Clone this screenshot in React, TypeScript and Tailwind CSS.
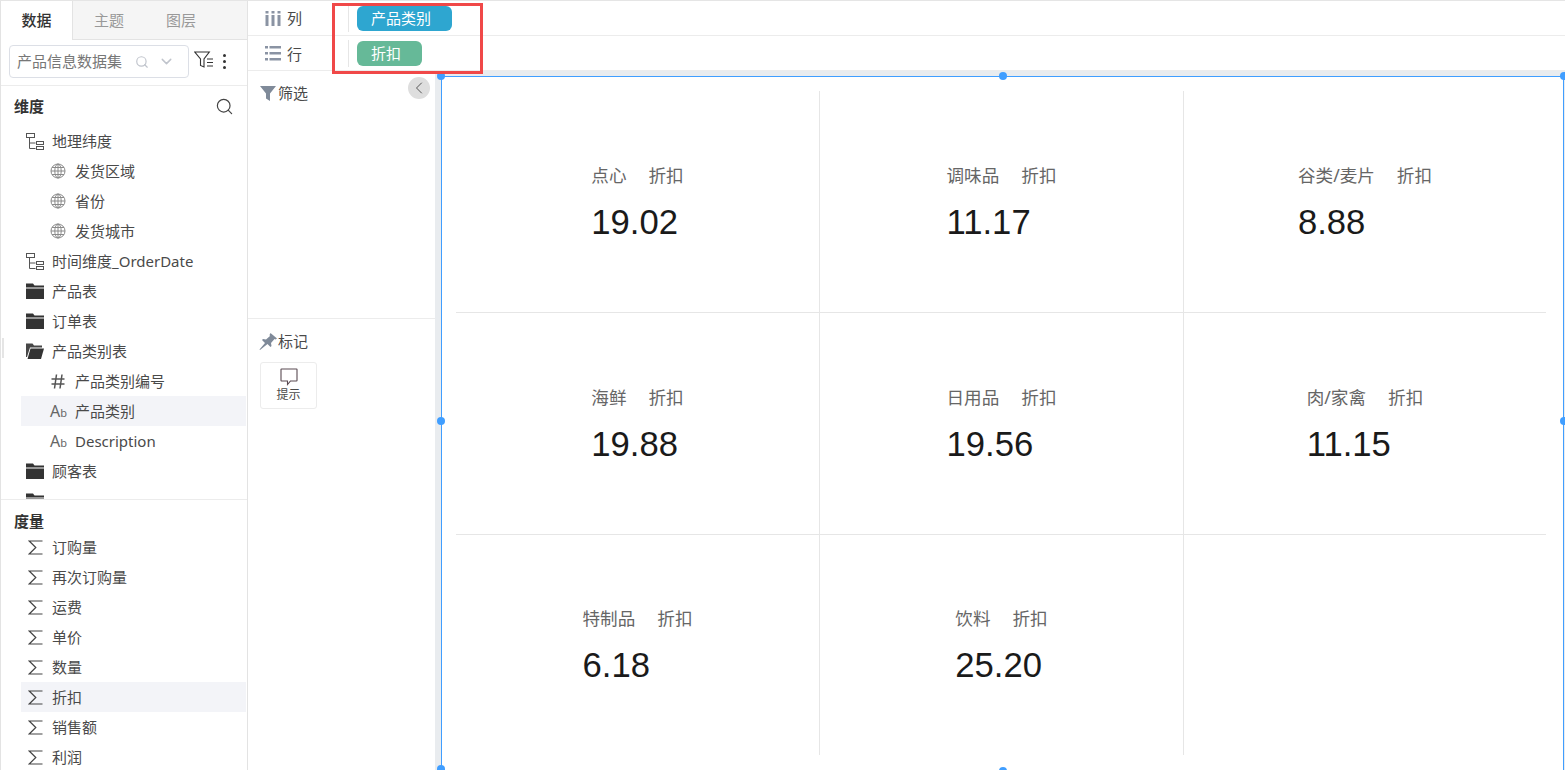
import { ChevronDown, ChevronLeft, Search } from "lucide-react";
import type { ReactNode } from "react";

const TreeIcon = () => (
  <svg width="18" height="17" viewBox="0 0 18 17" fill="none" stroke="#555" strokeWidth="1">
    <rect x="0.5" y="0.5" width="8" height="4" />
    <path d="M3.5 5v10.5h6M3.5 10h6" />
    <rect x="10.5" y="8.5" width="7" height="3" />
    <rect x="10.5" y="13.5" width="7" height="3" />
  </svg>
);

const GlobeIcon = () => (
  <svg width="16" height="16" viewBox="0 0 16 16" fill="none" stroke="#8a8a8a" strokeWidth="1">
    <circle cx="8" cy="8" r="7" />
    <ellipse cx="8" cy="8" rx="3.2" ry="7" />
    <path d="M8 1v14M1 8h14M2 4.5h12M2 11.5h12" />
  </svg>
);

const FolderIcon = () => (
  <svg width="18" height="16" viewBox="0 0 18 16" fill="#333">
    <path d="M0 0.5h7l1.5 2H18v2H0z" />
    <path d="M0 5.5h18V16H0z" />
  </svg>
);

const FolderOpenIcon = () => (
  <svg width="18" height="16" viewBox="0 0 18 16" fill="#333">
    <path d="M0 0.5h6.5l1.5 2h8v2H4L1 14H0z" opacity="0.9" />
    <path d="M4.5 5.5H18L15 16H1.5z" />
  </svg>
);

const SigmaIcon = () => (
  <svg width="15" height="15" viewBox="0 0 15 15" fill="none" stroke="#444" strokeWidth="1.2">
    <path d="M14.5 1H1.2L7.8 7.5 1.2 14h13.3" />
  </svg>
);

const HashIcon = () => (
  <svg width="14" height="15" viewBox="0 0 14 15" fill="none" stroke="#555" strokeWidth="1.5">
    <path d="M5.5 0.500L3.500 14.500M11 0.500L9 14.500M0.500 5h13M0.500 10h13" />
  </svg>
);

const AbIcon = () => (
  <span className="w-[16px] text-[16px] leading-none text-[#666]">
    A<span className="text-[11px]">b</span>
  </span>
);

const FilterListIcon = () => (
  <svg width="20" height="18" viewBox="0 0 20 18" fill="none" stroke="#333" strokeWidth="1.1">
    <path d="M0.8 1h14.5L10 8v8l-3.5-1.500V8z" />
    <path d="M13 8h6M13 11.500h6M13 15h6" />
  </svg>
);

const ColumnsIcon = () => (
  <svg width="16" height="15" viewBox="0 0 16 15" fill="#8a93a3">
    <rect x="0.500" y="0" width="3" height="2.500" />
    <rect x="0.500" y="4" width="3" height="11" />
    <rect x="6.500" y="0" width="3" height="2.500" />
    <rect x="6.500" y="4" width="3" height="11" />
    <rect x="12.500" y="0" width="3" height="2.500" />
    <rect x="12.500" y="4" width="3" height="11" />
  </svg>
);

const RowsIcon = () => (
  <svg width="16" height="15" viewBox="0 0 16 15" fill="#8a93a3">
    <rect x="0" y="0" width="3" height="2.500" />
    <rect x="4.500" y="0" width="11.500" height="2.500" />
    <rect x="0" y="6" width="3" height="2.500" />
    <rect x="4.500" y="6" width="11.500" height="2.500" />
    <rect x="0" y="12" width="3" height="2.500" />
    <rect x="4.500" y="12" width="11.500" height="2.500" />
  </svg>
);

const FunnelIcon = () => (
  <svg width="16" height="16" viewBox="0 0 16 16" fill="#7f8a99">
    <path d="M0 1h16L10 8.500V16l-4-2.500v-5z" />
  </svg>
);

const PinIcon = () => (
  <svg width="18" height="17" viewBox="0 0 18 17" fill="#7f8a99">
    <path d="M11.500 0L18 5.500l-1.500 1-1-.5-3.500 4 .5 3-1 1-3-3L1 17l-.5-.5L6 10 3 7l1-1 3 .5 4-3.500-.5-1z" />
  </svg>
);

const BubbleIcon = () => (
  <svg width="18" height="18" viewBox="0 0 18 18" fill="none" stroke="#5a4a52" strokeWidth="1.100">
    <path d="M1.500 1h15a.500.500 0 0 1 .500.500v11a.500.500 0 0 1-.500.500H10.500L7.500 16.500V13H1.500a.500.500 0 0 1-.500-.500v-11a.500.500 0 0 1 .500-.500z" />
  </svg>
);

type TreeRowProps = {
  icon: ReactNode;
  label: string;
  child?: boolean;
  active?: boolean;
};

const TreeRow = ({ icon, label, child, active }: TreeRowProps) => (
  <div className={`ml-[20px] mr-[1px] flex h-[30px] items-center ${active ? "bg-[#f3f4f8]" : ""}`}>
    <div className={`flex items-center justify-center ${child ? "ml-[29px] w-[16px]" : "ml-[5px] w-[18px]"}`}>
      {icon}
    </div>
    <span className={`whitespace-nowrap text-[15px] text-[#4a4a4a] ${child ? "ml-[9px]" : "ml-[8px]"}`}>{label}</span>
  </div>
);

const dimensions: TreeRowProps[] = [
  { icon: <TreeIcon />, label: "地理纬度" },
  { icon: <GlobeIcon />, label: "发货区域", child: true },
  { icon: <GlobeIcon />, label: "省份", child: true },
  { icon: <GlobeIcon />, label: "发货城市", child: true },
  { icon: <TreeIcon />, label: "时间维度_OrderDate" },
  { icon: <FolderIcon />, label: "产品表" },
  { icon: <FolderIcon />, label: "订单表" },
  { icon: <FolderOpenIcon />, label: "产品类别表" },
  { icon: <HashIcon />, label: "产品类别编号", child: true },
  { icon: <AbIcon />, label: "产品类别", child: true, active: true },
  { icon: <AbIcon />, label: "Description", child: true },
  { icon: <FolderIcon />, label: "顾客表" },
  { icon: <FolderIcon />, label: "" },
];

const measures = ["订购量", "再次订购量", "运费", "单价", "数量", "折扣", "销售额", "利润"];

const cards = [
  { name: "点心", value: "19.02" },
  { name: "调味品", value: "11.17" },
  { name: "谷类/麦片", value: "8.88" },
  { name: "海鲜", value: "19.88" },
  { name: "日用品", value: "19.56" },
  { name: "肉/家禽", value: "11.15" },
  { name: "特制品", value: "6.18" },
  { name: "饮料", value: "25.20" },
  null,
];

const Card = ({ card, index }: { card: (typeof cards)[number]; index: number }) => (
  <div
    className={`flex items-center justify-center border-[#e6e6e6] ${index % 3 !== 2 ? "border-r" : ""} ${
      index < 6 ? "border-b" : ""
    }`}
  >
    {card && (
      <div className="mt-[2px] flex flex-col">
        <div className="-mt-[1px] flex gap-[22px] text-[17.6px] leading-[24px] text-[#666]">
          <span>{card.name}</span>
          <span>折扣</span>
        </div>
        <div className="mt-[15px] font-['Liberation_Sans',sans-serif] text-[34.67px] leading-[40px] text-[#1a1a1a]">
          {card.value}
        </div>
      </div>
    )}
  </div>
);

const Handle = ({ className }: { className: string }) => (
  <div className={`absolute h-[8px] w-[8px] rounded-full bg-[#409eff] ${className}`} />
);

type ShelfRowProps = {
  icon: ReactNode;
  label: string;
  labelClass?: string;
  pill: string;
  pillClass: string;
};

const ShelfRow = ({ icon, label, labelClass, pill, pillClass }: ShelfRowProps) => (
  <div className="flex h-[35px] items-center border-b border-[#ececec]">
    <div className="flex w-[100px] items-center pl-[17px]">
      {icon}
      <span className={`ml-[6px] text-[15px] text-[#4a4a4a] ${labelClass ?? ""}`}>{label}</span>
    </div>
    <div className="h-[27px] w-px bg-[#e6e6e6]" />
    <div className={`ml-[8px] flex h-[25px] items-center rounded-[6px] pl-[14px] text-[15px] text-white ${pillClass}`}>
      {pill}
    </div>
  </div>
);

const App = () => {
  return (
    <div className="relative flex h-[770px] w-[1565px] overflow-hidden border-t border-[#e5e5e5] bg-white font-['Noto_Sans','Noto_Sans_CJK_SC',sans-serif]">
      {/* left data panel */}
      <div className="relative flex w-[248px] shrink-0 flex-col border-x border-[#e3e3e3]">
        <div className="absolute left-[1px] top-[337px] h-[20px] w-[2px] bg-[#e5e5e5]" />

        <div className="flex h-[39px] text-[15px]">
          <div className="flex w-[72px] items-center justify-center border-r border-[#e3e3e3] font-medium text-[#333]">数据</div>
          <div className="flex flex-1 border-b border-[#e3e3e3] bg-[#f5f5f5] text-[#999]">
            <div className="flex w-[72px] items-center justify-center">主题</div>
            <div className="flex w-[72px] items-center justify-center">图层</div>
          </div>
        </div>

        <div className="flex h-[46px] items-start border-b border-[#ececec] pl-[8px] pt-[5px]">
          <div className="flex h-[33px] w-[180px] items-center rounded-[4px] border border-[#dcdfe6] pl-[7px] text-[15px] text-[#777]">
            <span className="whitespace-nowrap">产品信息数据集</span>
            <Search size={14} className="ml-[13px] text-[#c0c4cc]" />
            <ChevronDown size={17} className="ml-[9px] text-[#c0c4cc]" />
          </div>
          <div className="ml-[5px] mt-[6px]">
            <FilterListIcon />
          </div>
          <div className="ml-[9px] mt-[9px] flex flex-col gap-[3px]">
            <div className="h-[3px] w-[3px] rounded-full bg-[#333]" />
            <div className="h-[3px] w-[3px] rounded-full bg-[#333]" />
            <div className="h-[3px] w-[3px] rounded-full bg-[#333]" />
          </div>
        </div>

        <div className="flex h-[40px] items-center justify-between pl-[13px] pr-[13px]">
          <span className="text-[15px] font-bold text-[#333]">维度</span>
          <Search size={19} strokeWidth={1.5} className="text-[#444]" />
        </div>

        <div className="h-[373px] overflow-hidden">
          {dimensions.map((row, i) => (
            <TreeRow key={i} {...row} />
          ))}
        </div>

        <div className="flex-1 overflow-hidden border-t border-[#ececec] pt-[10px]">
          <div className="pl-[13px] text-[15px] font-bold leading-[22px] text-[#333]">度量</div>
          {measures.map((m) => (
            <TreeRow key={m} icon={<SigmaIcon />} label={m} active={m === "折扣"} />
          ))}
        </div>
      </div>

      {/* right side */}
      <div className="flex min-w-0 flex-1 flex-col">
        <ShelfRow icon={<ColumnsIcon />} label="列" pill="产品类别" pillClass="w-[95px] bg-[#2ea6d0]" />
        <ShelfRow icon={<RowsIcon />} label="行" labelClass="mt-[2px]" pill="折扣" pillClass="w-[65px] bg-[#66b998]" />

        <div className="flex min-h-0 flex-1">
          <div className="relative flex w-[187px] shrink-0 flex-col">
            <div className="absolute left-[160px] top-[6px] flex h-[22px] w-[22px] items-center justify-center rounded-full bg-[#dedede]">
              <ChevronLeft size={20} strokeWidth={1.2} className="text-[#555]" />
            </div>
            <div className="flex h-[248px] items-start border-b border-[#ececec] pl-[12px] pt-[11px]">
              <div className="mt-[3px]">
                <FunnelIcon />
              </div>
              <span className="ml-[2px] text-[15px] text-[#4a4a4a]">筛选</span>
            </div>
            <div className="pl-[11px] pt-[11px]">
              <div className="flex items-center">
                <PinIcon />
                <span className="ml-[1px] text-[15px] text-[#4a4a4a]">标记</span>
              </div>
              <div className="ml-[1px] mt-[9px] flex h-[47px] w-[57px] flex-col items-center rounded-[3px] border border-[#ececec] pt-[5px]">
                <BubbleIcon />
                <span className="text-[12px] leading-[17px] text-[#4a4a4a]">提示</span>
              </div>
            </div>
          </div>

          {/* canvas */}
          <div className="min-w-0 flex-1 bg-[#e9ecef] pl-[6px] pt-[5px]">
            <div className="relative mr-[1px] h-[700px] border-x border-t border-[#409eff] bg-white pl-[14px] pt-[14px]">
              <div className="grid grid-cols-[364px_364px_362px] grid-rows-[222px_222px_220px]">
                {cards.map((card, i) => (
                  <Card key={i} card={card} index={i} />
                ))}
              </div>
              <Handle className="left-[-5px] top-[-5px]" />
              <Handle className="left-[557px] top-[-5px]" />
              <Handle className="right-[-5px] top-[-5px]" />
              <Handle className="left-[-5px] top-[340px]" />
              <Handle className="right-[-5px] top-[340px]" />
              <Handle className="left-[-5px] top-[688px]" />
              <Handle className="left-[557px] top-[690px]" />
            </div>
          </div>
        </div>
      </div>

      {/* red highlight box */}
      <div className="absolute left-[332px] top-[2px] h-[71px] w-[151px] border-[3px] border-[#f04848]" />
    </div>
  );
};

export default App;
